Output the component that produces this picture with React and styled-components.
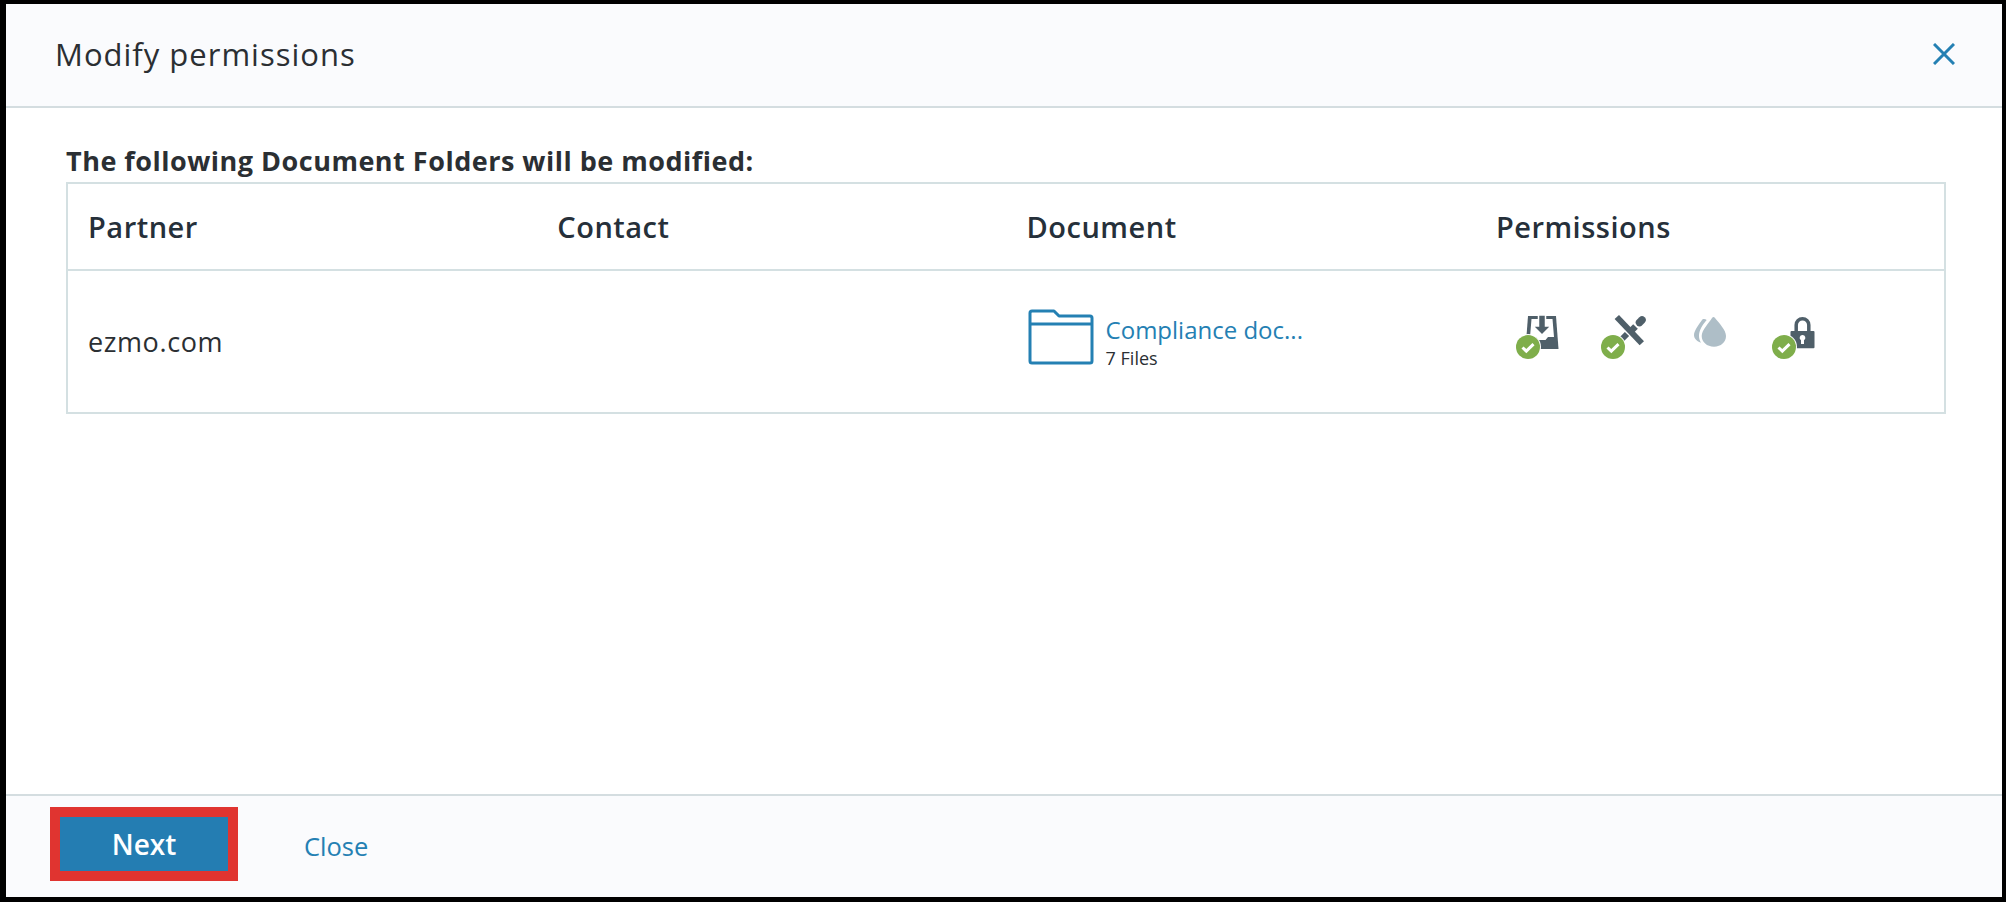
import React from 'react';
import styled, {createGlobalStyle} from 'styled-components';

const GlobalStyle = createGlobalStyle`
    html, body {
        margin: 0;
        padding: 0;
        background: #000;
    }
    body {
        font-family: "Open Sans", "Liberation Sans", sans-serif;
        color: #2b2f33;
    }
`;

const Frame = styled.div`
    box-sizing: border-box;
    width: 2006px;
    height: 902px;
    padding: 4px 4px 5px 6px;
    background: #000;
`;

const Dialog = styled.div`
    display: flex;
    flex-direction: column;
    height: 100%;
    background: #fff;
`;

const Header = styled.header`
    box-sizing: border-box;
    flex: none;
    height: 104px;
    display: flex;
    align-items: center;
    justify-content: space-between;
    padding: 0 47px 2px 49px;
    background: #fafbfd;
    border-bottom: 2px solid #d4dde0;
`;

const Title = styled.h1`
    margin: 0;
    font-size: 31px;
    font-weight: 400;
    letter-spacing: 1px;
    line-height: 40px;
    color: #2b2f33;
`;

const CloseIcon = styled.svg`
    display: block;
    width: 22px;
    height: 22px;
    stroke: #2480b3;
    stroke-width: 3;
    fill: none;
`;

const Body = styled.main`
    flex: 1;
    padding: 36px 60px 0;
`;

const Lead = styled.p`
    margin: 0 0 4px;
    font-size: 27px;
    font-weight: 700;
    letter-spacing: 0.5px;
    line-height: 34px;
    color: #2b2f33;
`;

const Table = styled.div`
    box-sizing: border-box;
    width: 1880px;
    border: 2px solid #d4e0e2;
`;

const Row = styled.div`
    box-sizing: border-box;
    display: grid;
    grid-template-columns: repeat(4, 469.3px);
    align-items: center;
    padding-left: 20px;
    height: ${({$head}) => ($head ? '87px' : '141px')};
    border-bottom: ${({$head}) => ($head ? '2px solid #d4e0e2' : 'none')};
`;

const HeadCell = styled.div`
    font-size: 29px;
    font-weight: 600;
    letter-spacing: 0.5px;
    color: #26303a;
`;

const Cell = styled.div`
    font-size: 27px;
    letter-spacing: 0.6px;
    color: #2b2f33;
`;

const DocumentCell = styled.div`
    display: flex;
    align-items: flex-start;
    gap: 12px;
    height: 66px;
    padding-left: 1px;
`;

const FolderIcon = styled.svg`
    display: block;
    width: 66px;
    height: 56px;
    fill: none;
    stroke: #2480b3;
    stroke-width: 3;
    stroke-linejoin: round;
`;

const DocumentText = styled.div`
    padding-top: 5px;
`;

const DocumentName = styled.a`
    display: block;
    font-size: 24px;
    line-height: 32px;
    color: #2480b3;
`;

const FileCount = styled.div`
    font-size: 18px;
    line-height: 24px;
    color: #2b2f33;
`;

const Permissions = styled.div`
    display: flex;
    gap: 49.5px;
    padding: 0 0 18px 29px;
`;

const Permission = styled.div`
    position: relative;
    width: 36px;
    height: 34px;
`;

const PermissionGlyph = styled.svg`
    display: block;
    width: 36px;
    height: 34px;
    overflow: visible;
`;

const CheckBadge = styled.svg`
    position: absolute;
    left: -10px;
    bottom: -10px;
    width: 26px;
    height: 26px;
`;

const Footer = styled.footer`
    box-sizing: border-box;
    flex: none;
    height: 103px;
    display: flex;
    align-items: center;
    gap: 66px;
    padding: 0 0 6px 44px;
    background: #fafbfd;
    border-top: 2px solid #d4dde0;
`;

const NextButton = styled.button`
    box-sizing: border-box;
    width: 188px;
    height: 74px;
    border: 10px solid #e03430;
    background: #247db2;
    color: #fff;
    font-family: inherit;
    font-size: 28px;
    font-weight: 600;
`;

const CloseLink = styled.a`
    padding-top: 4px;
    font-size: 25.5px;
    color: #2480b3;
`;

const Check = () => (
    <CheckBadge viewBox="0 0 26 26">
        <circle cx="13" cy="13" r="13" fill="#fff"/>
        <circle cx="13" cy="13" r="12" fill="#7fae4b"/>
        <path d="M7.500 13.500l3.800 3.600 7.200-7" fill="none" stroke="#fff" strokeWidth="3"/>
    </CheckBadge>
);

const InboxIcon = () => (
    <PermissionGlyph viewBox="0 0 36 34">
        <path fill="#4f5f69" d="M3 0h28l2.500 33H.5z"/>
        <path fill="#fff" d="M6.500 3h21l1.500 18h-6l-2.500 3h-7L11 21H5z"/>
        <path fill="#4f5f69" stroke="#fff" strokeWidth="1.500" d="M13.500-1h7v11h5.500l-9 9-9-9h5.500z"/>
    </PermissionGlyph>
);

const PrintOffIcon = () => (
    <PermissionGlyph viewBox="0 0 36 34">
        <g fill="none" stroke="#4f5f69">
            <path strokeWidth="7.500" strokeLinecap="round" d="M32 4l-2.500 2.500"/>
            <path strokeWidth="6.500" d="M25.500 10.500l-4 4"/>
            <path strokeWidth="6" d="M17 18l-7 7"/>
        </g>
        <path d="M6.800 1l25 26.300" fill="none" stroke="#4f5f69" strokeWidth="6"/>
    </PermissionGlyph>
);

const DropsIcon = () => (
    <PermissionGlyph viewBox="0 0 36 34">
        <path fill="#aebec7" d="M17.500 1c.5 0 1 .3 1.500 1 4 5 11 12 11 18 0 6-5 10.700-12 10.700S5.700 26 5.700 20C5.700 14 13 7 16 2c.5-.7 1-1 1.500-1z"/>
        <path fill="#aebec7" d="M8 3c1 0 2 .3 2.700 1C6 9 3 15 3 20c0 2 .5 4.500 2 6.700C0 25-2 22-2 19c0-4 5-11 8-15 .5-.7 1-1 2-1z"/>
    </PermissionGlyph>
);

const LockIcon = () => (
    <PermissionGlyph viewBox="0 0 36 34">
        <path fill="none" stroke="#4f5f69" strokeWidth="3.500" d="M15.200 16V9a6.300 6.300 0 0 1 12.600 0v7"/>
        <path fillRule="evenodd" fill="#4f5f69" d="M10.500 15h22a1 1 0 0 1 1 1v15.300a1 1 0 0 1-1 1h-22a1 1 0 0 1-1-1V16a1 1 0 0 1 1-1zm11 4a2.800 2.800 0 0 0-1.500 5.200V28h3v-3.800A2.800 2.800 0 0 0 21.500 19z"/>
    </PermissionGlyph>
);

const permissions = [
    {key: 'download', Icon: InboxIcon, on: true},
    {key: 'print', Icon: PrintOffIcon, on: true},
    {key: 'watermark', Icon: DropsIcon, on: false},
    {key: 'lock', Icon: LockIcon, on: true},
];

export default function App() {
    return (
        <Frame>
            <GlobalStyle/>
            <Dialog>
                <Header>
                    <Title>Modify permissions</Title>
                    <CloseIcon viewBox="0 0 22 22">
                        <path d="M1 1l20 20M21 1L1 21"/>
                    </CloseIcon>
                </Header>
                <Body>
                    <Lead>The following Document Folders will be modified:</Lead>
                    <Table>
                        <Row $head>
                            <HeadCell>Partner</HeadCell>
                            <HeadCell>Contact</HeadCell>
                            <HeadCell>Document</HeadCell>
                            <HeadCell>Permissions</HeadCell>
                        </Row>
                        <Row>
                            <Cell>ezmo.com</Cell>
                            <Cell/>
                            <DocumentCell>
                                <FolderIcon viewBox="0 0 66 56">
                                    <path d="M2 4a2 2 0 0 1 2-2h22l5 5h31a2 2 0 0 1 2 2v43a2 2 0 0 1-2 2H4a2 2 0 0 1-2-2z"/>
                                    <path d="M2 15h62"/>
                                </FolderIcon>
                                <DocumentText>
                                    <DocumentName>Compliance doc...</DocumentName>
                                    <FileCount>7 Files</FileCount>
                                </DocumentText>
                            </DocumentCell>
                            <Permissions>
                                {permissions.map(({key, Icon, on}) => (
                                    <Permission key={key}>
                                        <Icon/>
                                        {on && <Check/>}
                                    </Permission>
                                ))}
                            </Permissions>
                        </Row>
                    </Table>
                </Body>
                <Footer>
                    <NextButton>Next</NextButton>
                    <CloseLink>Close</CloseLink>
                </Footer>
            </Dialog>
        </Frame>
    );
}
